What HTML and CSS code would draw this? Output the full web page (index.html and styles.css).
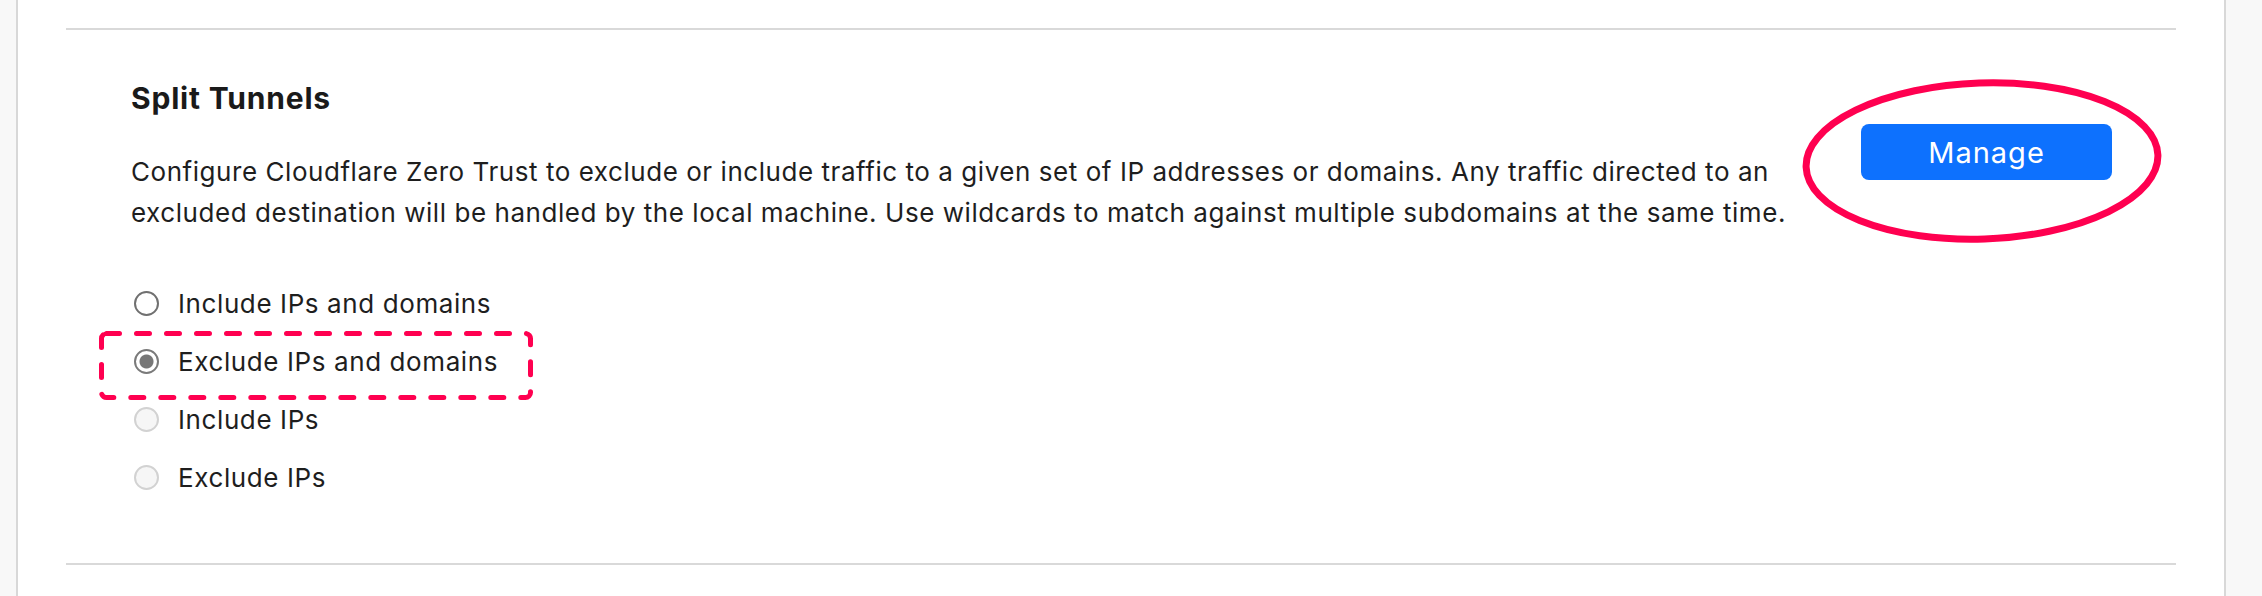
FILE: index.html
```html
<!DOCTYPE html>
<html lang="en">

<head>
  <meta charset="UTF-8">
  <meta name="viewport" content="width=device-width, initial-scale=1.0">
  <title>Split Tunnels</title>
  <link rel="stylesheet" href="styles.css">
</head>

<body>
  <div class="card">
    <section class="setting">
      <div class="setting-main">
        <h2 class="setting-title">Split Tunnels</h2>
        <p class="setting-desc">Configure Cloudflare Zero Trust to exclude or include traffic to a given set of IP addresses or domains. Any traffic directed to an excluded destination will be handled by the local machine. Use wildcards to match against multiple subdomains at the same time.</p>

        <div class="options">
          <label class="option">
            <input type="radio" name="mode" value="include-all">
            <span>Include IPs and domains</span>
          </label>
          <label class="option highlighted">
            <input type="radio" name="mode" value="exclude-all" checked>
            <span>Exclude IPs and domains</span>
            <svg class="dash-box" viewBox="0 0 434 69" preserveAspectRatio="none">
              <rect x="2.5" y="2.5" width="429" height="64" rx="5" ry="5" />
            </svg>
          </label>
          <label class="option">
            <input type="radio" name="mode" value="include-ips" disabled>
            <span>Include IPs</span>
          </label>
          <label class="option">
            <input type="radio" name="mode" value="exclude-ips" disabled>
            <span>Exclude IPs</span>
          </label>
        </div>
      </div>

      <div class="setting-action">
        <button type="button" class="btn-primary">Manage</button>
        <svg class="circle-mark" viewBox="0 0 362 166">
          <ellipse cx="181" cy="83" rx="176" ry="78" transform="rotate(-2 181 83)" />
        </svg>
      </div>
    </section>
  </div>
</body>

</html>
```

FILE: styles.css
```css
body {
  margin: 0;
  background-color: #f8f8f8;
  font-family: Inter, "Noto Sans", sans-serif;
  color: #1e1e1e;
}

.card {
  margin: 0 36px 0 16px;
  padding: 28px 48px 0 48px;
  height: 568px;
  background-color: #fff;
  border-left: 2px solid #d8d8d8;
  border-right: 2px solid #d8d8d8;
}

.setting {
  display: flex;
  justify-content: space-between;
  align-items: flex-start;
  padding: 50px 64px 57px 65px;
  border-top: 2px solid #d9d9d9;
  border-bottom: 2px solid #d9d9d9;
}

.setting-main {
  flex: 1;
}

.setting-title {
  margin: 0;
  font-size: 30px;
  line-height: 36px;
  font-weight: 700;
  color: #1a1a1a;
  letter-spacing: 0.8px;
}

.setting-desc {
  margin: 35px 0 0 0;
  max-width: 1700px;
  font-size: 26px;
  line-height: 41px;
  letter-spacing: 0.55px;
}

.options {
  margin-top: 41px;
}

.option {
  position: relative;
  display: flex;
  align-items: center;
  gap: 19px;
  height: 58px;
  font-size: 26px;
  letter-spacing: 0.6px;
  width: max-content;
}

.option input {
  appearance: none;
  -webkit-appearance: none;
  margin: 0 0 0 3px;
  width: 25px;
  height: 25px;
  border: 2px solid #707070;
  border-radius: 50%;
  background-color: #fff;
  box-sizing: border-box;
}

.option input:checked {
  border-color: #7a7a7a;
  background: radial-gradient(circle, #777 0 6.5px, #fff 7.5px);
}

.option input:disabled {
  border-color: #d2d2d2;
  background-color: #f6f6f6;
}

.dash-box {
  position: absolute;
  left: -32px;
  top: -1px;
  width: 434px;
  height: 69px;
  overflow: visible;
}

.dash-box rect {
  fill: none;
  stroke: #ff0050;
  stroke-width: 5;
  stroke-dasharray: 13 17;
  stroke-linecap: round;
}

.setting-action {
  position: relative;
  margin-top: 44px;
}

.btn-primary {
  display: block;
  width: 251px;
  height: 56px;
  padding: 0;
  background-color: #0d71fe;
  color: #fff;
  border: none;
  border-radius: 8px;
  font-family: Inter, "Noto Sans", sans-serif;
  font-size: 29px;
  letter-spacing: 1px;
  cursor: pointer;
}

.circle-mark {
  position: absolute;
  left: -60px;
  top: -46px;
  width: 362px;
  height: 166px;
  overflow: visible;
}

.circle-mark ellipse {
  fill: none;
  stroke: #ff0050;
  stroke-width: 7;
}
```
